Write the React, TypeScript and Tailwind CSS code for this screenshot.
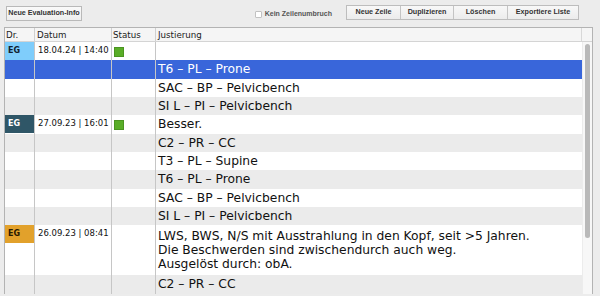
import React from "react";

type Row = {
    dr?: "blue" | "slate" | "orange";
    date?: string;
    status?: boolean;
    text: string[];
    selected?: boolean;
};

const rows: Row[] = [
    { dr: "blue", date: "18.04.24 | 14:40", status: true, text: [""] },
    { text: ["T6 – PL – Prone"], selected: true },
    { text: ["SAC – BP – Pelvicbench"] },
    { text: ["SI L – PI – Pelvicbench"] },
    { dr: "slate", date: "27.09.23 | 16:01", status: true, text: ["Besser."] },
    { text: ["C2 – PR – CC"] },
    { text: ["T3 – PL – Supine"] },
    { text: ["T6 – PL – Prone"] },
    { text: ["SAC – BP – Pelvicbench"] },
    { text: ["SI L – PI – Pelvicbench"] },
    {
        dr: "orange",
        date: "26.09.23 | 08:41",
        text: [
            "LWS, BWS, N/S mit Ausstrahlung in den Kopf, seit >5 Jahren.",
            "Die Beschwerden sind zwischendurch auch weg.",
            "Ausgelöst durch: obA.",
        ],
    },
    { text: ["C2 – PR – CC"] },
];

const drStyle = {
    blue: "bg-[#7fcdfb] text-[#10202e]",
    slate: "bg-[#2f5667] text-white",
    orange: "bg-[#e2a12b] text-[#2a1a00]",
};

function ToolButton({ label, last }: { label: string; last?: boolean }) {
    return (
        <div
            className={`h-full flex items-center justify-center whitespace-nowrap font-['Liberation_Sans',sans-serif] text-[7.2px] font-bold text-[#333] ${
                last ? "" : "border-r border-[#c4c4c4]"
            }`}
        >
            {label}
        </div>
    );
}

export default function App() {
    return (
        <div className="w-[600px] h-[296px] overflow-hidden bg-[#ececec] font-['DejaVu_Sans',sans-serif] text-[#111]">
            {/* Toolbar */}
            <div className="h-[27px] flex items-start pt-[5px] pl-[6px] pr-[21px]">
                <div className="h-[15px] w-[76px] mt-[1px] flex items-center justify-center whitespace-nowrap border border-[#b9b9b9] bg-gradient-to-b from-[#fafafa] to-[#eeeeee] font-['Liberation_Sans',sans-serif] text-[7.2px] font-bold text-[#333]">
                    Neue Evaluation-Info
                </div>
                <div className="ml-auto flex items-center mt-[4px]">
                    <span className="w-[7px] h-[7px] border border-[#c2c2c2] bg-white rounded-[1px]" />
                    <span className="ml-[3px] whitespace-nowrap font-['Liberation_Sans',sans-serif] text-[7px] font-bold text-[#555]">
                        Kein Zeilenumbruch
                    </span>
                </div>
                <div className="ml-[14px] h-[15px] w-[233px] grid grid-cols-[54px_53px_54px_1fr] border border-[#bdbdbd] bg-gradient-to-b from-[#f8f8f8] to-[#ececec]">
                    <ToolButton label="Neue Zeile" />
                    <ToolButton label="Duplizieren" />
                    <ToolButton label="Löschen" />
                    <ToolButton label="Exportiere Liste" last />
                </div>
            </div>

            {/* Table */}
            <div className="ml-[4px] w-[589px] border-l border-t border-r border-[#b3b3b3] bg-white">
                <div className="h-[14px] flex bg-[#f5f5f5] border-b border-[#d4d4d4] text-[8.7px] text-[#222]">
                    <div className="w-[30px] pl-[1px] border-r border-[#d0d0d0] leading-[14px]">Dr.</div>
                    <div className="w-[77px] pl-[2px] border-r border-[#d0d0d0] leading-[14px]">Datum</div>
                    <div className="w-[44px] pl-[1px] border-r border-[#d0d0d0] leading-[14px]">Status</div>
                    <div className="flex-1 pl-[2px] border-r border-[#d8d8d8] leading-[14px]">Justierung</div>
                    <div className="w-[10px]" />
                </div>
                <div className="flex">
                    <div className="flex-1 min-w-0">
                        {rows.map((r, i) => {
                            const stripe = r.selected
                                ? "bg-[#3966da] text-white"
                                : i % 2 === 0
                                  ? "bg-white"
                                  : "bg-[#ebebeb]";
                            const tall = r.text.length > 1;
                            return (
                                <div
                                    key={i}
                                    className={`flex ${tall ? "h-[50px]" : "h-[18.33px]"} ${stripe}`}
                                >
                                    <div className="w-[30px] border-r border-[#c6c6c6]">
                                        {r.dr && (
                                            <div
                                                className={`h-[18px] pl-[3px] flex items-center text-[8px] font-bold ${drStyle[r.dr]}`}
                                            >
                                                EG
                                            </div>
                                        )}
                                    </div>
                                    <div className="w-[77px] pl-[3px] pt-[2px] border-r border-[#c6c6c6] text-[8.5px] leading-[12px] whitespace-nowrap">
                                        {r.date}
                                    </div>
                                    <div className="w-[44px] pl-[2px] pt-[5px] border-r border-[#c6c6c6]">
                                        {r.status && (
                                            <div className="w-[10px] h-[10px] bg-[#59ad27] border border-[#4a9420]" />
                                        )}
                                    </div>
                                    <div
                                        className={`flex-1 pl-[2px] text-[12.3px] ${
                                            tall ? "pt-[4px] leading-[14px]" : "leading-[19px]"
                                        }`}
                                    >
                                        {r.text.map((t, j) => (
                                            <div key={j} className="whitespace-nowrap">
                                                {t}
                                            </div>
                                        ))}
                                    </div>
                                </div>
                            );
                        })}
                    </div>
                    {/* Scrollbar */}
                    <div className="w-[10px] bg-[#f7f7f7] border-l border-[#ececec] relative">
                        <div className="absolute top-[2px] left-[2px] w-[5px] h-[194px] rounded-full bg-[#b9b9b9]" />
                    </div>
                </div>
            </div>
        </div>
    );
}
